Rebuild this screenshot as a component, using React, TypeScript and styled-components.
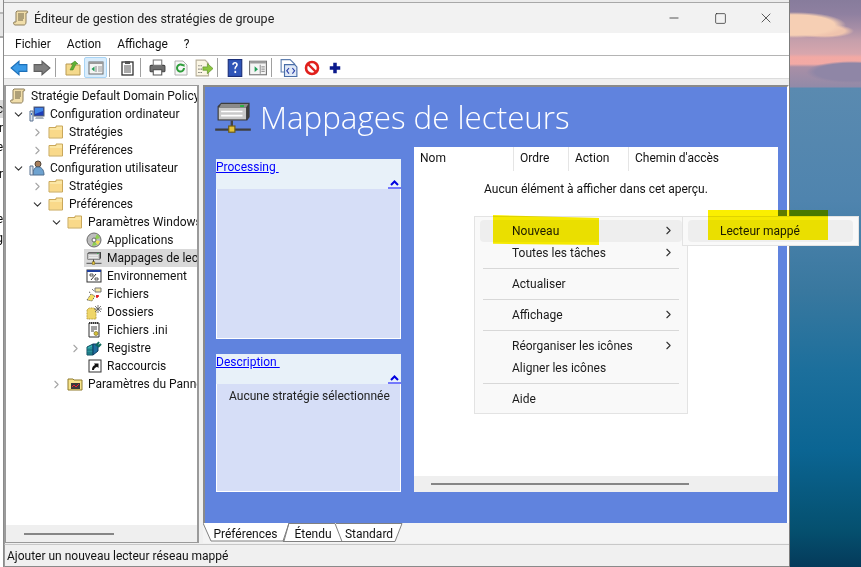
import React from "react";
import styled, { createGlobalStyle } from "styled-components";
import { ChevronDown, ChevronRight, Minus, Square, X } from "lucide-react";

const Global = createGlobalStyle`
  html, body { margin: 0; padding: 0; background: #333; }
  body { font-family: Roboto, "Noto Sans", "Liberation Sans", sans-serif; font-size: 12px; color: #111; overflow: hidden; }
  * { box-sizing: border-box; }
`;

const Desktop = styled.div`
  position: relative;
  display: flex;
  width: 861px;
  height: 567px;
  overflow: hidden;
`;

const BehindWindow = styled.div`
  width: 4px;
  flex: none;
  background: linear-gradient(#f0f0f0 0 12px, #b8b8b8 12px 14px, #e6e6e6 14px 36px, #a8a8a8 36px 38px, #fff 38px);
  display: flex;
  flex-direction: column;
  align-items: flex-end;
  overflow: hidden;
  border-right: 1px solid #8a8a8a;
`;

const BehindLetter = styled.span<{ $top: number; $shade?: boolean }>`
  margin-top: ${(p) => p.$top}px;
  height: 18px;
  line-height: 18px;
  width: 4px;
  display: flex;
  justify-content: flex-end;
  flex: none;
  background: ${(p) => (p.$shade ? "#d9d9d9" : "transparent")};
`;

const Wallpaper = styled.div`
  flex: 1;
  background:
    radial-gradient(ellipse 52px 13px at 4px 25px, #f6cfb4 0 78%, transparent 100%),
    radial-gradient(ellipse 30px 7px at 34px 31px, #efc4ae 0 70%, transparent 100%),
    radial-gradient(ellipse 46px 11px at 62px 72px, #8f86a6 0 80%, transparent 100%),
    linear-gradient(#877c9c 0, #8f80a0 14px, #a68ea6 28px, #c59fab 40px, #d8a6ad 54px, #f2a9a4 57px, #f3aaa5 64px, #a98fa6 67px, #928aa8 87px,
      #5a8ab0 88px, #4f84ae 200px, #39789f 290px, #1c6f9c 370px, #0b6593 450px, #05506f 530px, #043a5a 567px);
`;

const WindowFrame = styled.div`
  width: 786px;
  flex: none;
  padding-top: 3px;
  background: linear-gradient(#ececec 0 2px, #a8a8a8 2px 3px);
  display: flex;
  flex-direction: column;
  border-right: 1px solid #7c7c7c;
`;

const TitleBar = styled.div`
  height: 30px;
  flex: none;
  background: #f2f2f2;
  display: flex;
  align-items: center;
  padding-left: 9px;
  gap: 5px;
  font-size: 12.500px;
`;

const TitleText = styled.span`
  flex: 1;
  color: #222;
`;

const WindowButtons = styled.div`
  display: flex;
`;

const WindowButton = styled.div`
  width: 46px;
  height: 30px;
  display: flex;
  align-items: center;
  justify-content: center;
  color: #222;
`;

const MenuBar = styled.div`
  height: 23px;
  flex: none;
  background: #fff;
  border-bottom: 1px solid #b4b4b4;
  display: flex;
  align-items: center;
  gap: 16px;
  padding-left: 11px;
`;

const Toolbar = styled.div`
  height: 23px;
  flex: none;
  background: #fff;
  border-bottom: 1px solid #dcdcdc;
  display: flex;
  align-items: center;
  padding: 1px 0 0 3px;
`;

const ToolButton = styled.div<{ $pressed?: boolean }>`
  width: 23px;
  height: 21px;
  display: flex;
  align-items: center;
  justify-content: center;
  border-radius: 2px;
  border: 1px solid ${(p) => (p.$pressed ? "#a8d4f5" : "transparent")};
  background: ${(p) => (p.$pressed ? "#d9ecfb" : "transparent")};
`;

const ToolSeparator = styled.div`
  width: 1px;
  height: 19px;
  margin: 0 5px 0 2px;
  background: #a0a0a0;
`;

const Gutter = styled.div`
  height: 6px;
  flex: none;
  background: #efefef;
`;

const Workspace = styled.div`
  flex: 1;
  min-height: 0;
  display: flex;
  background: #f0f0f0;
  border-left: 1px solid #9c9c9c;
`;

const TreePanel = styled.div`
  width: 194px;
  flex: none;
  height: 458px;
  background: #fff;
  border: 1px solid #9a9a9a;
  border-right-width: 2px;
  display: flex;
  flex-direction: column;
  margin-right: 4px;
`;

const TreeRows = styled.div`
  flex: 1;
  padding-top: 1px;
  overflow: hidden;
`;

const TreeRow = styled.div<{ $level: number }>`
  height: 18px;
  display: flex;
  align-items: center;
  padding-left: ${(p) => 2 + Math.max(p.$level - 1, 0) * 19}px;
  white-space: nowrap;
`;

const Expander = styled.div<{ $open?: boolean }>`
  width: 19px;
  flex: none;
  padding-left: 4px;
  display: flex;
  align-items: center;
  color: ${(p) => (p.$open ? "#333" : "#a6a6a6")};
`;

const TreeCell = styled.div<{ $selected?: boolean }>`
  flex: 1;
  min-width: 0;
  height: 18px;
  padding-left: 2px;
  display: flex;
  align-items: center;
  gap: 5px;
  overflow: hidden;
  background: ${(p) => (p.$selected ? "#d9d9d9" : "transparent")};
`;

const HorizontalBar = styled.div<{ $height: number; $left: number; $width: number }>`
  height: ${(p) => p.$height}px;
  flex: none;
  background: #efefef;
  display: flex;
  align-items: center;
  padding-left: ${(p) => p.$left}px;
  &::before {
    content: "";
    width: ${(p) => p.$width}px;
    height: 2px;
    background: #868686;
  }
`;

const RightColumn = styled.div`
  flex: 1;
  min-width: 0;
  display: flex;
  flex-direction: column;
`;

const BluePane = styled.div`
  height: 438px;
  flex: none;
  background: #6083de;
  border-top: 2px solid #8a8a8a;
  border-left: 2px solid #8a8a8a;
  border-right: 2px solid #fff;
  padding-left: 11px;
`;

const PaneHeading = styled.div`
  height: 60px;
  display: flex;
  align-items: center;
  gap: 8px;
  margin-left: -2px;
`;

const PaneTitle = styled.h1`
  margin: 0;
  font-size: 31.300px;
  font-weight: 300;
  font-family: "Open Sans", "Noto Sans", sans-serif;
  color: #fff;
  line-height: 60px;
`;

const PaneBody = styled.div`
  display: grid;
  grid-template-columns: 185px 364px;
  column-gap: 13px;
  height: 345px;
`;

const SidePanels = styled.div`
  padding-top: 12px;
  display: flex;
  flex-direction: column;
  gap: 15px;
`;

const SidePanel = styled.section<{ $height: number }>`
  height: ${(p) => p.$height}px;
  display: flex;
  flex-direction: column;
`;

const SideHeader = styled.div`
  height: 30px;
  flex: none;
  background: #e8f1f9;
  position: relative;
`;

const SideLink = styled.a`
  color: #0000ff;
  text-decoration: underline;
  white-space: pre;
  line-height: 16px;
  display: block;
`;

const CollapseMark = styled.svg`
  position: absolute;
  right: 0;
  bottom: 0;
`;

const SideBody = styled.div`
  flex: 1;
  background: #d6def7;
  border: 1px solid #fff;
  border-top: 0;
  padding: 5px 0 5px 12px;
  color: #222;
  white-space: nowrap;
`;

const ListPanel = styled.div`
  background: #fff;
  display: flex;
  flex-direction: column;
  height: 345px;
`;

const ListHeader = styled.div`
  height: 24px;
  flex: none;
  display: flex;
`;

const ListColumn = styled.div<{ $width: number }>`
  width: ${(p) => p.$width}px;
  padding-left: 6px;
  line-height: 22px;
  flex: none;
  border-right: 1px solid #e5e5e5;
  &:last-child { border-right: 0; }
`;

const ListEmpty = styled.div`
  flex: 1;
  text-align: center;
  padding-top: 11px;
`;

const TabStrip = styled.div`
  position: relative;
  height: 20px;
  flex: none;
  display: flex;
  background: #f4f4f4;
`;

const TabLines = styled.svg`
  position: absolute;
  left: 0;
  top: 0;
`;

const Tab = styled.div<{ $width: number }>`
  position: relative;
  width: ${(p) => p.$width}px;
  text-align: center;
  line-height: 22px;
`;

const StatusBar = styled.div`
  height: 23px;
  flex: none;
  background: #f0f0f0;
  border-left: 1px solid #9c9c9c;
  border-top: 1px solid #c8c8c8;
  border-bottom: 1px solid #8a8a8a;
  padding-left: 2px;
  line-height: 23px;
`;

const ContextMenu = styled.div`
  position: absolute;
  left: 474px;
  top: 216px;
  width: 214px;
  padding: 3px 5px;
  background: #f9f9f9;
  border: 1px solid #e3e3e3;
`;

const SubMenu = styled(ContextMenu)`
  left: 682px;
  width: 177px;
`;

const MenuItem = styled.div<{ $hot?: boolean; $indent?: number }>`
  height: 22px;
  display: flex;
  align-items: center;
  justify-content: space-between;
  padding: 0 7px 1px ${(p) => p.$indent ?? 32}px;
  border-radius: 4px;
  background: ${(p) => (p.$hot ? "#eeeeee" : "transparent")};
  color: #1a1a1a;
  svg { color: #333; }
`;

const MenuRule = styled.div`
  height: 1px;
  background: #d8d8d8;
  margin: 4px 3px;
`;

const Highlight = styled.div<{ $left: number; $top: number; $width: number; $height: number; $tilted?: boolean }>`
  position: absolute;
  left: ${(p) => p.$left}px;
  top: ${(p) => p.$top}px;
  width: ${(p) => p.$width}px;
  height: ${(p) => p.$height}px;
  background: #fbef00;
  mix-blend-mode: multiply;
  clip-path: ${(p) => (p.$tilted ? "polygon(0 0, 100% 10%, 100% 100%, 0 96%)" : "none")};
`;

const Ico = ({ size = 16, children }: { size?: number; children: React.ReactNode }) => (
  <svg width={size} height={size} viewBox="0 0 16 16" style={{ flex: "none" }}>
    {children}
  </svg>
);

const ScrollIcon = () => (
  <Ico>
    <path d="M4 1h10c1 0 1 2 0 2l-1 0v9c0 2-1 3-2 3H2c-1 0-2-2-1-3h2V2z" fill="#f1deaa" stroke="#8d7f5c" />
    <path d="M5 4h6M5 6h6M5 8h6M5 10h5" stroke="#6c6347" />
  </Ico>
);

const FolderIcon = () => (
  <Ico>
    <path d="M1 3.500h7V2h6.500v12H1z" fill="#fbe6a4" stroke="#c9a75a" />
    <path d="M2 6h12v7H2z" fill="#f9d98a" />
  </Ico>
);

const ComputerIcon = () => (
  <Ico>
    <rect x="5" y="1" width="10" height="9" fill="#1f3fb8" stroke="#59636f" />
    <path d="M6 2h8v3l-8 3z" fill="#3f86e8" />
    <path d="M7 11h7l1 2H6z" fill="#aab4bf" />
    <path d="M1 5h3v10H1z" fill="#dfe6ee" stroke="#5b7391" />
    <path d="M2 7h1v2H2z" fill="#3a6ec0" />
  </Ico>
);

const UserIcon = () => (
  <Ico>
    <circle cx="9" cy="4" r="3" fill="#a97f5b" stroke="#4f4438" />
    <path d="M4 15c0-6 2-8 5-8s6 2 6 8z" fill="#6ea2cf" stroke="#4f6f8f" />
    <path d="M1 6h3v9H1z" fill="#dfe6ee" stroke="#5b7391" />
  </Ico>
);

const DiscIcon = () => (
  <Ico>
    <circle cx="8" cy="8" r="7" fill="#bdbdbd" stroke="#6b6b6b" />
    <path d="M8 8l3-6 3 4zM8 8l-2 6 5-1z" fill="#8ed04f" />
    <path d="M8 8l6 1-2 4z" fill="#f0e050" />
    <circle cx="8" cy="8" r="2" fill="#fff" stroke="#666" />
  </Ico>
);

const DriveIcon = ({ size = 16 }: { size?: number }) => (
  <Ico size={size}>
    <path d="M1.500 3.500L3 2h12v6l-1 1.500H1.500z" fill="#3d3d3d" />
    <path d="M2 4h11.500v5H2z" fill="#c9c9c9" />
    <path d="M3 2.500h11.500l-1 1.500H2.200z" fill="#8a8a8a" />
    <path d="M3 5.700h9M3 7.400h9" stroke="#fff" strokeWidth="0.700" />
    <path d="M11 3h1.600v0.800H11z" fill="#22b53f" />
    <path d="M7.500 9.500v3" stroke="#444" strokeWidth="1" />
    <path d="M0.500 13.300h15" stroke="#3f3f3f" strokeWidth="0.900" />
    <rect x="6.200" y="11.800" width="2.600" height="2.600" fill="#e4c33a" stroke="#6d5c1a" strokeWidth="0.500" />
  </Ico>
);

const EnvIcon = () => (
  <Ico>
    <rect x="1" y="2" width="14" height="12" fill="#fff" stroke="#333" />
    <path d="M1 2h14v2H1z" fill="#1f3f9e" />
    <path d="M5 12l5-6" stroke="#333" />
    <path d="M4 6h3v2H4zM9 10h3v2H9z" fill="none" stroke="#333" strokeWidth="0.800" />
  </Ico>
);

const FilesIcon = () => (
  <Ico>
    <path d="M9 2h6v4H9z" fill="#f6e7a3" stroke="#777" />
    <path d="M1 14l4-6 4 2-3 5z" fill="#f6e063" stroke="#555" strokeDasharray="1 1" />
    <path d="M6 3l2 2M3 6l2 1" stroke="#444" strokeDasharray="1 1" />
    <path d="M11 9v3M10 10h3" stroke="#d11" strokeWidth="1.400" />
  </Ico>
);

const SparkFolderIcon = () => (
  <Ico>
    <path d="M1 6l2-2h5l2 2v9H1z" fill="#efd668" stroke="#b59a3c" strokeDasharray="1 0.600" />
    <path d="M12 1v8M8 5h8M9 2l6 6M15 2l-6 6" stroke="#555" strokeWidth="0.800" />
  </Ico>
);

const IniIcon = () => (
  <Ico>
    <path d="M3 1h10v14H3z" fill="#fff" stroke="#333" />
    <path d="M3 1h10" stroke="#333" strokeDasharray="1 1" strokeWidth="2" />
    <path d="M5 5h6M5 7h6M5 9h3" stroke="#444" />
    <circle cx="10" cy="11.500" r="2" fill="#d6c23a" stroke="#6d6018" strokeWidth="0.600" />
  </Ico>
);

const RegistryIcon = () => (
  <Ico>
    <path d="M1 7l6-3v11H1z" fill="#37b2b2" stroke="#0c4a60" />
    <path d="M7 4h5v7l-5 4z" fill="#1f6f9f" stroke="#0c3a60" />
    <path d="M3 8v7M5 7v8M1 10h6M1 13h6" stroke="#0c4a60" strokeWidth="0.600" />
    <path d="M10 6l3-4M12 7l3-3" stroke="#0a6a5a" strokeWidth="2" />
  </Ico>
);

const ShortcutIcon = () => (
  <Ico>
    <rect x="3" y="2" width="12" height="12" fill="#fff" stroke="#333" />
    <path d="M6 12c0-3 1-4 3-5L8 5.500h4.500V10L11 8.700c-2 .8-3 1.800-3 3.300z" fill="#111" />
  </Ico>
);

const PanelFolderIcon = () => (
  <Ico>
    <path d="M1 3h5l1 1h8v10H1z" fill="#f8e58c" stroke="#8f7a2c" />
    <rect x="4" y="7" width="9" height="6" fill="#3a3a3a" />
    <path d="M5 11l2-2 2 2 3-3" stroke="#e23" fill="none" />
  </Ico>
);

const treeRows: { level: number; label: string; icon: React.ReactNode; open?: boolean; leaf?: boolean; selected?: boolean }[] = [
  { level: 0, label: "Stratégie Default Domain Policy", icon: <ScrollIcon /> },
  { level: 1, label: "Configuration ordinateur", icon: <ComputerIcon />, open: true },
  { level: 2, label: "Stratégies", icon: <FolderIcon /> },
  { level: 2, label: "Préférences", icon: <FolderIcon /> },
  { level: 1, label: "Configuration utilisateur", icon: <UserIcon />, open: true },
  { level: 2, label: "Stratégies", icon: <FolderIcon /> },
  { level: 2, label: "Préférences", icon: <FolderIcon />, open: true },
  { level: 3, label: "Paramètres Windows", icon: <FolderIcon />, open: true },
  { level: 4, label: "Applications", icon: <DiscIcon />, leaf: true },
  { level: 4, label: "Mappages de lecteurs", icon: <DriveIcon />, leaf: true, selected: true },
  { level: 4, label: "Environnement", icon: <EnvIcon />, leaf: true },
  { level: 4, label: "Fichiers", icon: <FilesIcon />, leaf: true },
  { level: 4, label: "Dossiers", icon: <SparkFolderIcon />, leaf: true },
  { level: 4, label: "Fichiers .ini", icon: <IniIcon />, leaf: true },
  { level: 4, label: "Registre", icon: <RegistryIcon /> },
  { level: 4, label: "Raccourcis", icon: <ShortcutIcon />, leaf: true },
  { level: 3, label: "Paramètres du Panneau de configuration", icon: <PanelFolderIcon /> },
];

const ToolIcons = () => (
  <Toolbar>
    <ToolButton>
      <Ico size={18}><path d="M1 8l7-6v3h7v6H8v3z" fill="#3a9be8" stroke="#1c6fb8" /></Ico>
    </ToolButton>
    <ToolButton>
      <Ico size={18}><path d="M15 8L8 2v3H1v6h7v3z" fill="#7f7f7f" stroke="#5f5f5f" /></Ico>
    </ToolButton>
    <ToolSeparator />
    <ToolButton>
      <Ico><path d="M1 4h5l1 1h8v10H1z" fill="#f4d98c" stroke="#b99a52" /><path d="M5 10l3-6-2 0 4-3 3 3-2 0-3 6z" fill="#5fb332" stroke="#3d7a1e" strokeWidth="0.500" /></Ico>
    </ToolButton>
    <ToolButton $pressed>
      <Ico><rect x="1" y="2" width="14" height="12" fill="#f4f4f4" stroke="#6d6d6d" /><path d="M1 2h14v2H1z" fill="#9a9a9a" /><path d="M8 6v6" stroke="#888" /><path d="M6.500 6.500v5L3.500 9z" fill="#1f9d55" /><path d="M10 7h4M10 9h4M10 11h4" stroke="#999" /></Ico>
    </ToolButton>
    <ToolSeparator />
    <ToolButton>
      <Ico><rect x="3" y="2" width="11" height="13" fill="#fff" stroke="#333" strokeWidth="1.300" /><path d="M6 1h5v3H6z" fill="#555" /><path d="M5 6h7M5 8h7M5 10h7M5 12h7" stroke="#555" /></Ico>
    </ToolButton>
    <ToolSeparator />
    <ToolButton>
      <Ico size={17}><rect x="1" y="6" width="14" height="6" rx="1" fill="#6f6f6f" stroke="#444" /><path d="M4 1h8v5H4z" fill="#fff" stroke="#777" /><path d="M4 10h8v5H4z" fill="#fff" stroke="#555" /></Ico>
    </ToolButton>
    <ToolButton>
      <Ico><path d="M2 1h8l4 4v10H2z" fill="#f7f7f7" stroke="#b0b0b0" /><path d="M11 8a3.500 3.500 0 1 1-1-2.400" fill="none" stroke="#2f9e3b" strokeWidth="2" /><path d="M8.500 5l3-1v3z" fill="#2f9e3b" /></Ico>
    </ToolButton>
    <ToolButton>
      <Ico size={18}><path d="M1 1h8l3 3v11H1z" fill="#fbf6e4" stroke="#b8b09a" /><path d="M3 6h3M3 9h3M3 12h3" stroke="#555" strokeDasharray="1 1" /><path d="M7 7h4V4l5 4.500-5 4.500v-3H7z" fill="#8cc63f" stroke="#5d8f2a" strokeWidth="0.600" /></Ico>
    </ToolButton>
    <ToolSeparator />
    <ToolButton>
      <Ico size={18}><rect x="2" y="0.500" width="12" height="15" fill="#2f55b8" stroke="#1b2f7a" /><path d="M5.500 5c0-3 5-3 5 0 0 2-2 2-2 4H7.500c0-3 1.500-2.500 1.500-4s-2-1-2 0z" fill="#fff" /><rect x="7.500" y="10.500" width="1.500" height="2" fill="#fff" /></Ico>
    </ToolButton>
    <ToolButton>
      <Ico size={18}><rect x="0.500" y="2" width="15" height="12" fill="#f4f4f4" stroke="#777" /><path d="M1 2h14v2H1z" fill="#9a9a9a" /><path d="M10 5v8" stroke="#999" /><path d="M5 6.500v5L8 9z" fill="#1f9d55" /><path d="M11 7h3M11 9h3M11 11h3" stroke="#999" /></Ico>
    </ToolButton>
    <ToolSeparator />
    <ToolButton>
      <Ico size={18}><path d="M1 0.500h8l4 4v7H1z" fill="#fff" stroke="#5f7fb0" /><path d="M4 5h9l2 2v8.500H4z" fill="#dfe9f7" stroke="#4a6ea8" /><path d="M8 8l-2 2.500L8 13M11 8l2 2.500L11 13" stroke="#2a3fa8" fill="none" /></Ico>
    </ToolButton>
    <ToolButton>
      <Ico><circle cx="8" cy="8" r="6" fill="#fff" stroke="#e0201c" strokeWidth="2.600" /><path d="M4 4l8 8" stroke="#e0201c" strokeWidth="2.400" /></Ico>
    </ToolButton>
    <ToolButton>
      <Ico size={14}><path d="M6 2h4v4h4v4h-4v4H6v-4H2V6h4z" fill="#0b1a8c" /></Ico>
    </ToolButton>
  </Toolbar>
);

const collapse = (
  <CollapseMark width="13" height="10" viewBox="0 0 13 10">
    <path d="M3 6l3.500-3.500L10 6" fill="none" stroke="#0000e0" strokeWidth="2" />
    <path d="M0 9h13" stroke="#0000ff" />
  </CollapseMark>
);

const App: React.FC = () => {
  return (
    <Desktop>
      <Global />
      <BehindWindow>
        <BehindLetter $top={100} $shade>c</BehindLetter>
        <BehindLetter $top={1}>r</BehindLetter>
        <BehindLetter $top={1}>e</BehindLetter>
        <BehindLetter $top={9}>r</BehindLetter>
        <BehindLetter $top={27}>e</BehindLetter>
        <BehindLetter $top={1}>g</BehindLetter>
      </BehindWindow>
      <WindowFrame>
        <TitleBar>
          <ScrollIcon />
          <TitleText>Éditeur de gestion des stratégies de groupe</TitleText>
          <WindowButtons>
            <WindowButton><Minus size={14} strokeWidth={1.300} /></WindowButton>
            <WindowButton><Square size={13} strokeWidth={1.300} /></WindowButton>
            <WindowButton><X size={16} strokeWidth={1.100} /></WindowButton>
          </WindowButtons>
        </TitleBar>
        <MenuBar>
          <span>Fichier</span>
          <span>Action</span>
          <span>Affichage</span>
          <span>?</span>
        </MenuBar>
        <ToolIcons />
        <Gutter />
        <Workspace>
          <TreePanel>
            <TreeRows>
              {treeRows.map((row, i) => (
                <TreeRow key={i} $level={row.level}>
                  {row.level > 0 && (
                    <Expander $open={row.open}>
                      {!row.leaf && (row.open ? <ChevronDown size={13} strokeWidth={2} /> : <ChevronRight size={13} strokeWidth={2} />)}
                    </Expander>
                  )}
                  <TreeCell $selected={row.selected}>
                    {row.icon}
                    <span>{row.label}</span>
                  </TreeCell>
                </TreeRow>
              ))}
            </TreeRows>
            <HorizontalBar $height={17} $left={18} $width={90} />
          </TreePanel>
          <RightColumn>
            <BluePane>
              <PaneHeading>
                <DriveIcon size={38} />
                <PaneTitle>Mappages de lecteurs</PaneTitle>
              </PaneHeading>
              <PaneBody>
                <SidePanels>
                  <SidePanel $height={180}>
                    <SideHeader>
                      <SideLink>Processing </SideLink>
                      {collapse}
                    </SideHeader>
                    <SideBody />
                  </SidePanel>
                  <SidePanel $height={138}>
                    <SideHeader>
                      <SideLink>Description </SideLink>
                      {collapse}
                    </SideHeader>
                    <SideBody>Aucune stratégie sélectionnée</SideBody>
                  </SidePanel>
                </SidePanels>
                <ListPanel>
                  <ListHeader>
                    <ListColumn $width={100}>Nom</ListColumn>
                    <ListColumn $width={55}>Ordre</ListColumn>
                    <ListColumn $width={60}>Action</ListColumn>
                    <ListColumn $width={149}>Chemin d'accès</ListColumn>
                  </ListHeader>
                  <ListEmpty>Aucun élément à afficher dans cet aperçu.</ListEmpty>
                  <HorizontalBar $height={16} $left={17} $width={258} />
                </ListPanel>
              </PaneBody>
            </BluePane>
            <TabStrip>
              <TabLines width="210" height="20" viewBox="0 0 210 20">
                <path d="M0 0l8 18h73l5-18M86 0l-6 18M86 0.500h46l7 18H80M133 0.500h66l-7 18h-53" fill="#fff" stroke="#808080" strokeWidth="1" />
              </TabLines>
              <Tab $width={85}>Préférences</Tab>
              <Tab $width={50}>Étendu</Tab>
              <Tab $width={62}>Standard</Tab>
            </TabStrip>
          </RightColumn>
        </Workspace>
        <StatusBar>Ajouter un nouveau lecteur réseau mappé</StatusBar>
      </WindowFrame>
      <Wallpaper />
      <ContextMenu>
        <MenuItem $hot>Nouveau<ChevronRight size={13} strokeWidth={2} /></MenuItem>
        <MenuItem>Toutes les tâches<ChevronRight size={13} strokeWidth={2} /></MenuItem>
        <MenuRule />
        <MenuItem>Actualiser</MenuItem>
        <MenuRule />
        <MenuItem>Affichage<ChevronRight size={13} strokeWidth={2} /></MenuItem>
        <MenuRule />
        <MenuItem>Réorganiser les icônes<ChevronRight size={13} strokeWidth={2} /></MenuItem>
        <MenuItem>Aligner les icônes</MenuItem>
        <MenuRule />
        <MenuItem>Aide</MenuItem>
      </ContextMenu>
      <SubMenu>
        <MenuItem $hot>Lecteur mappé</MenuItem>
      </SubMenu>
      <Highlight $left={493} $top={215} $width={106} $height={30} $tilted />
      <Highlight $left={708} $top={210} $width={120} $height={30} />
    </Desktop>
  );
};

export default App;
